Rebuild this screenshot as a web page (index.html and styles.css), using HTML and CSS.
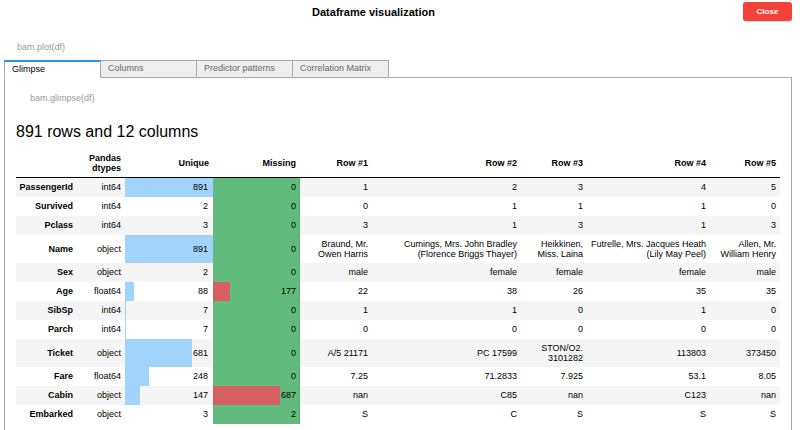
FILE: index.html
```html
<!DOCTYPE html>
<html>
<head>
<meta charset="utf-8">
<link rel="stylesheet" href="styles.css">
</head>
<body>
<div class="app">
  <header class="topbar">
    <div class="title">Dataframe visualization</div>
    <button class="close">Close</button>
  </header>
  <div class="code-label plot">bam.plot(df)</div>
  <div class="tabbar">
    <div class="tab active">Glimpse</div>
    <div class="tab">Columns</div>
    <div class="tab">Predictor patterns</div>
    <div class="tab">Correlation Matrix</div>
    <div class="tab-fill"></div>
  </div>
  <div class="panel">
    <div class="code-label glimpse">bam.glimpse(df)</div>
    <h2 class="summary">891 rows and 12 columns</h2>
    <table class="glimpse-table">
      <colgroup>
        <col class="c-idx"><col class="c-dtype"><col class="c-unique"><col class="c-missing">
        <col class="c-r1"><col class="c-r2"><col class="c-r3"><col class="c-r4"><col class="c-r5">
      </colgroup>
      <thead>
        <tr><th></th><th>Pandas<br>dtypes</th><th>Unique</th><th>Missing</th><th>Row #1</th><th>Row #2</th><th>Row #3</th><th>Row #4</th><th>Row #5</th></tr>
      </thead>
      <tbody>
        <tr><th>PassengerId</th><td>int64</td><td class="unique" style="--w:100%">891</td><td class="missing" style="--w:0%">0</td><td>1</td><td>2</td><td>3</td><td>4</td><td>5</td></tr>
        <tr><th>Survived</th><td>int64</td><td class="unique" style="--w:0.22%">2</td><td class="missing" style="--w:0%">0</td><td>0</td><td>1</td><td>1</td><td>1</td><td>0</td></tr>
        <tr><th>Pclass</th><td>int64</td><td class="unique" style="--w:0.34%">3</td><td class="missing" style="--w:0%">0</td><td>3</td><td>1</td><td>3</td><td>1</td><td>3</td></tr>
        <tr><th>Name</th><td>object</td><td class="unique" style="--w:100%">891</td><td class="missing" style="--w:0%">0</td><td>Braund, Mr.<br>Owen Harris</td><td>Cumings, Mrs. John Bradley<br>(Florence Briggs Thayer)</td><td>Heikkinen,<br>Miss. Laina</td><td>Futrelle, Mrs. Jacques Heath<br>(Lily May Peel)</td><td>Allen, Mr.<br>William Henry</td></tr>
        <tr><th>Sex</th><td>object</td><td class="unique" style="--w:0.22%">2</td><td class="missing" style="--w:0%">0</td><td>male</td><td>female</td><td>female</td><td>female</td><td>male</td></tr>
        <tr><th>Age</th><td>float64</td><td class="unique" style="--w:9.88%">88</td><td class="missing" style="--w:19.87%">177</td><td>22</td><td>38</td><td>26</td><td>35</td><td>35</td></tr>
        <tr><th>SibSp</th><td>int64</td><td class="unique" style="--w:0.79%">7</td><td class="missing" style="--w:0%">0</td><td>1</td><td>1</td><td>0</td><td>1</td><td>0</td></tr>
        <tr><th>Parch</th><td>int64</td><td class="unique" style="--w:0.79%">7</td><td class="missing" style="--w:0%">0</td><td>0</td><td>0</td><td>0</td><td>0</td><td>0</td></tr>
        <tr><th>Ticket</th><td>object</td><td class="unique" style="--w:76.43%">681</td><td class="missing" style="--w:0%">0</td><td>A/5 21171</td><td>PC 17599</td><td>STON/O2.<br>3101282</td><td>113803</td><td>373450</td></tr>
        <tr><th>Fare</th><td>float64</td><td class="unique" style="--w:27.83%">248</td><td class="missing" style="--w:0%">0</td><td>7.25</td><td>71.2833</td><td>7.925</td><td>53.1</td><td>8.05</td></tr>
        <tr><th>Cabin</th><td>object</td><td class="unique" style="--w:16.5%">147</td><td class="missing" style="--w:77.1%">687</td><td>nan</td><td>C85</td><td>nan</td><td>C123</td><td>nan</td></tr>
        <tr><th>Embarked</th><td>object</td><td class="unique" style="--w:0.34%">3</td><td class="missing" style="--w:0.22%">2</td><td>S</td><td>C</td><td>S</td><td>S</td><td>S</td></tr>
      </tbody>
    </table>
  </div>
</div>
</body>
</html>
```
FILE: styles.css
```css
* { box-sizing: border-box; }
html, body { margin: 0; padding: 0; background: #fff; }
body {
  font-family: "Liberation Sans", Arial, Helvetica, sans-serif;
  color: #000;
  overflow: hidden;
}
.app {
  padding: 2px 8px 0 4px;
}
.topbar {
  display: flex;
  align-items: center;
  height: 19px;
}
.title {
  flex: 1;
  text-align: center;
  font-weight: bold;
  font-size: 11px;
}
.close {
  width: 49px;
  height: 19px;
  border: none;
  border-radius: 3px;
  background: #f44336;
  color: #fff;
  font-family: inherit;
  font-weight: bold;
  font-size: 8px;
  padding: 0;
  box-shadow: 0 1px 1px rgba(0,0,0,0.15);
}
.code-label {
  font-size: 9px;
  line-height: 11px;
  height: 11px;
  color: #9a9a9a;
}
.code-label.plot {
  margin: 21px 0 7px 13px;
}
.tabbar {
  display: flex;
  height: 18px;
}
.tab {
  flex: 0 0 97px;
  margin-right: -1px;
  height: 18px;
  border: 1px solid #a8a8a8;
  background: #eeeeee;
  color: #666;
  font-size: 9px;
  line-height: 15px;
  padding-left: 7px;
  white-space: nowrap;
}
.tab.active {
  position: relative;
  z-index: 1;
  background: #fff;
  color: #000;
  border-top: 2px solid #2196f3;
  border-bottom: 1px solid #fff;
  line-height: 14px;
}
.tab-fill {
  flex: 1;
  margin-left: 1px;
  border-bottom: 1px solid #a8a8a8;
}
.panel {
  border: 1px solid #a8a8a8;
  border-top: none;
  padding: 15px 10px 0 11px;
  height: 360px;
}
.code-label.glimpse {
  margin-left: 14px;
}
.summary {
  margin: 18px 0 8px 0;
  font-size: 16px;
  line-height: 19px;
  font-weight: normal;
}
.glimpse-table {
  border-collapse: collapse;
  table-layout: fixed;
  width: 764px;
  font-size: 9px;
  line-height: 10px;
}
.c-idx { width: 63px; }
.c-dtype { width: 46px; }
.c-unique { width: 88px; }
.c-missing { width: 87px; }
.c-r1 { width: 72px; }
.c-r2 { width: 149px; }
.c-r3 { width: 66px; }
.c-r4 { width: 123px; }
.c-r5 { width: 70px; }
.glimpse-table th,
.glimpse-table td {
  padding: 4px 4px 4px 2px;
  text-align: right;
  vertical-align: middle;
  white-space: nowrap;
}
.glimpse-table thead th {
  font-weight: bold;
  border-bottom: 1px solid #000;
}
.glimpse-table tbody tr { height: 19px; }
.glimpse-table tbody tr:nth-child(odd) { background: #f5f5f5; }
.glimpse-table tbody th { font-weight: bold; padding-right: 6px; }
.glimpse-table td.unique {
  padding-right: 5px;
  background: linear-gradient(to right, #a2d4fb var(--w), transparent var(--w));
}
.glimpse-table td.missing {
  background: linear-gradient(to right, #d65f5f var(--w), #60bb7c var(--w));
  box-shadow: inset -1px 0 0 #55ad70;
}
```
